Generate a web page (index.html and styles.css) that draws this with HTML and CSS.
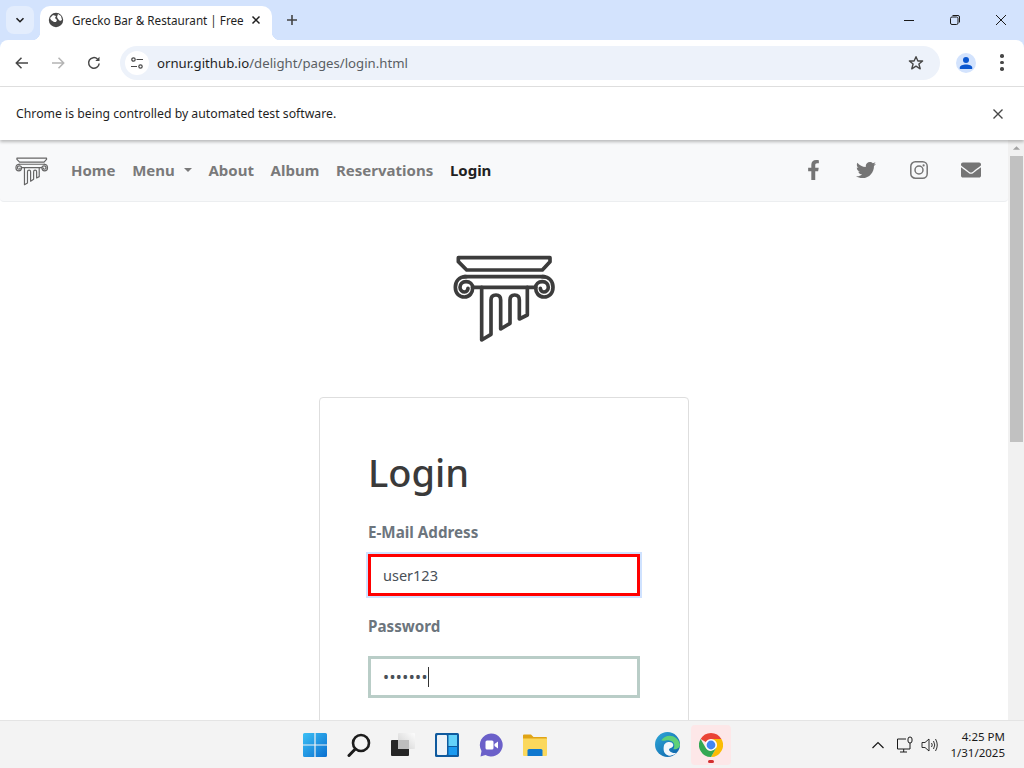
FILE: index.html
```html
<!DOCTYPE html>
<html lang="en">
<head>
<meta charset="utf-8">
<title>Grecko Bar &amp; Restaurant | Free</title>
<link rel="stylesheet" href="styles.css">
</head>
<body>
<svg class="defs" width="0" height="0" aria-hidden="true">
  <symbol id="column" viewBox="0 0 390 315">
    <g fill="none" stroke="currentColor" stroke-width="11" stroke-linejoin="round" stroke-linecap="round">
      <path d="M55 38H330V50L307 75H80L55 50Z"/>
      <path d="M72 95H313"/>
      <path d="M78 95C56 95 46 110 46 127C46 145 58 156 73 156C89 156 98 143 98 128C98 117 90 110 78 110C67 110 60 118 60 127C60 135 67 141 74 141C80 141 84 136 84 130"/>
      <path d="M307 95C329 95 339 110 339 127C339 145 327 156 312 156C296 156 287 143 287 128C287 117 295 110 307 110C318 110 325 118 325 127C325 135 318 141 311 141C305 141 301 136 301 130"/>
      <path d="M98 127H287"/>
      <path d="M125 127V285L153 268V165Q153 150 168 150Q182 150 182 165V252L210 235V165Q210 150 224 150Q238 150 238 165V222L262 210V127"/>
    </g>
  </symbol>
</svg>

<div class="screen">
  <header class="tabstrip">
    <button class="tab-search">
      <svg class="i12" viewBox="0 0 12 12"><path d="M2.500 4.200L6 7.700L9.500 4.200" fill="none" stroke="#1f1f1f" stroke-width="1.600"/></svg>
    </button>
    <div class="tab">
      <svg class="i16" viewBox="0 0 16 16"><circle cx="8" cy="8" r="7.200" fill="#474747"/><path d="M2 6l3-3 3 1-1 2 2 2-1 2H6L3 8zM10 2l3 2 1 4-2 1-2-2-1-2z" fill="#fff"/></svg>
      <span class="tab-title">Grecko Bar &amp; Restaurant | Free</span>
      <svg class="i10" viewBox="0 0 10 10"><path d="M1.500 1.500L8.500 8.500M8.500 1.500L1.500 8.500" stroke="#1f1f1f" stroke-width="1.500"/></svg>
    </div>
    <svg class="new-tab" viewBox="0 0 12 12"><path d="M6 1V11M1 6H11" stroke="#444" stroke-width="1.600"/></svg>
    <div class="window-controls">
      <svg class="i12" viewBox="0 0 12 12"><path d="M1 6.500H11" stroke="#1a1a1a"/></svg>
      <svg class="i12" viewBox="0 0 12 12"><rect x="1.500" y="3" width="7.500" height="7.500" rx="1.500" fill="none" stroke="#1a1a1a"/><path d="M3.500 1.500H9A1.500 1.500 0 0 1 10.500 3V8.500" fill="none" stroke="#1a1a1a"/></svg>
      <svg class="i12" viewBox="0 0 12 12"><path d="M1 1L11 11M11 1L1 11" stroke="#1a1a1a"/></svg>
    </div>
  </header>

  <div class="toolbar">
    <div class="nav-buttons">
      <svg class="i16" viewBox="0 0 16 16"><path d="M14 8H2.500M7.500 2.800L2.300 8L7.500 13.200" fill="none" stroke="#474747" stroke-width="1.500"/></svg>
      <svg class="i16" viewBox="0 0 16 16"><path d="M2 8H13.500M8.500 2.800L13.700 8L8.500 13.200" fill="none" stroke="#b4b4b4" stroke-width="1.500"/></svg>
      <svg class="i16" viewBox="0 0 16 16"><path d="M13.200 8.500A5.300 5.300 0 1 1 11.500 4" fill="none" stroke="#474747" stroke-width="1.500"/><path d="M13.500 1.800V6H9.300" fill="#474747"/></svg>
    </div>
    <div class="omnibox">
      <span class="site-info">
        <svg class="i14" viewBox="0 0 14 14"><g fill="none" stroke="#474747" stroke-width="1.200"><circle cx="3.500" cy="3.500" r="1.700"/><path d="M6.500 3.500H13M1 10.500H7"/><circle cx="10.500" cy="10.500" r="1.700"/></g></svg>
      </span>
      <span class="url"><span class="url-host">ornur.github.io</span>/delight/pages/login.html</span>
      <svg class="star" viewBox="0 0 16 16"><path d="M8 1.700L9.900 6H14.600L10.900 9L12.200 13.800L8 11.200L3.800 13.800L5.100 9L1.400 6H6.100Z" fill="none" stroke="#474747" stroke-width="1.400" stroke-linejoin="round"/></svg>
    </div>
    <span class="profile">
      <svg class="i14" viewBox="0 0 14 14"><circle cx="7" cy="4" r="3" fill="#0b57d0"/><path d="M.8 13V11.500C.8 9.500 4 8.500 7 8.500S13.200 9.500 13.200 11.500V13Z" fill="#0b57d0"/></svg>
    </span>
    <span class="menu-dots"><i></i><i></i><i></i></span>
  </div>

  <div class="infobar">
    <span>Chrome is being controlled by automated test software.</span>
    <svg class="i12" viewBox="0 0 12 12"><path d="M1.500 1.500L10.500 10.500M10.500 1.500L1.500 10.500" stroke="#474747" stroke-width="1.400"/></svg>
  </div>

  <div class="viewport">
    <main class="page">
      <nav class="navbar">
        <svg class="brand" viewBox="0 0 390 315"><use href="#column"/></svg>
        <ul class="nav-links">
          <li>Home</li>
          <li class="dropdown">Menu</li>
          <li>About</li>
          <li>Album</li>
          <li>Reservations</li>
          <li class="active">Login</li>
        </ul>
        <div class="socials">
          <span class="social"><svg class="fb" viewBox="0 0 320 512"><path d="M279.14 288l14.22-92.66h-88.91v-60.13c0-25.35 12.42-50.06 52.24-50.06h40.42V6.26S260.43 0 225.36 0c-73.22 0-121.08 44.38-121.08 124.72v70.62H22.89V288h81.39v224h100.17V288z"/></svg></span>
          <span class="social"><svg class="tw" viewBox="0 0 512 512"><path d="M459.37 151.716c.325 4.548.325 9.097.325 13.645 0 138.72-105.583 298.558-298.558 298.558-59.452 0-114.68-17.219-161.137-47.106 8.447.974 16.568 1.299 25.34 1.299 49.055 0 94.213-16.568 130.274-44.832-46.132-.975-84.792-31.188-98.112-72.772 6.498.974 12.995 1.624 19.818 1.624 9.421 0 18.843-1.3 27.614-3.573-48.081-9.747-84.143-51.98-84.143-102.985v-1.299c13.969 7.797 30.214 12.67 47.431 13.319-28.264-18.843-46.781-51.005-46.781-87.391 0-19.492 5.197-37.36 14.294-52.954 51.655 63.675 129.3 105.258 216.365 109.807-1.624-7.797-2.599-15.918-2.599-24.04 0-57.828 46.782-104.934 104.934-104.934 30.213 0 57.502 12.67 76.67 33.137 23.715-4.548 46.456-13.32 66.599-25.34-7.798 24.366-24.366 44.833-46.132 57.827 21.117-2.273 41.584-8.122 60.426-16.243-14.292 20.791-32.161 39.308-52.628 54.253z"/></svg></span>
          <span class="social"><svg class="ig" viewBox="0 0 18 18"><rect x=".8" y=".8" width="16.400" height="16.400" rx="4.500" fill="none" stroke="currentColor" stroke-width="1.500"/><circle cx="9" cy="9" r="4" fill="none" stroke="currentColor" stroke-width="1.500"/><circle cx="13.600" cy="4.400" r="1.100" fill="currentColor"/></svg></span>
          <span class="social"><svg class="env" viewBox="0 0 512 512"><path d="M502.3 190.8c3.9-3.1 9.7-.2 9.7 4.7V400c0 26.5-21.5 48-48 48H48c-26.5 0-48-21.5-48-48V195.6c0-5 5.7-7.8 9.7-4.7 22.4 17.4 52.1 39.5 154.1 113.6 21.1 15.4 56.7 47.8 92.2 47.6 35.7.3 72-32.8 92.3-47.6 102-74.1 131.6-96.3 154-113.7zM256 320c23.2.4 56.6-29.2 73.4-41.4 132.7-96.3 142.8-104.7 173.4-128.7 5.8-4.500 9.200-11.500 9.200-18.900v-19c0-26.500-21.500-48-48-48H48C21.500 64 0 85.500 0 112v19c0 7.400 3.400 14.300 9.200 18.900 30.600 23.900 40.700 32.400 173.400 128.700 16.800 12.200 50.200 41.800 73.400 41.400z"/></svg></span>
        </div>
      </nav>

      <svg class="hero-logo" viewBox="0 0 390 315"><use href="#column"/></svg>

      <section class="card">
        <h1>Login</h1>
        <label class="label-email">E-Mail Address</label>
        <div class="field field-email">user123</div>
        <label class="label-password">Password</label>
        <div class="field field-password"><span class="dots">•••••••</span><span class="caret"></span></div>
      </section>
    </main>
    <aside class="scrollbar">
      <svg class="scroll-arrow" viewBox="0 0 10 6"><path d="M5 1L9 5H1Z" fill="#a3a3a3"/></svg>
      <div class="scroll-thumb"></div>
    </aside>
  </div>

  <footer class="taskbar">
    <div class="slot">
      <svg class="i24" viewBox="0 0 24 24"><defs><linearGradient id="win" x1="0" y1="0" x2="1" y2="1"><stop offset="0" stop-color="#3cc0f5"/><stop offset="1" stop-color="#0a6fd0"/></linearGradient></defs><path d="M0 1.500A1.500 1.500 0 0 1 1.500 0H11.400V11.400H0ZM12.600 0H22.500A1.500 1.500 0 0 1 24 1.500V11.400H12.600ZM0 12.600H11.400V24H1.500A1.500 1.500 0 0 1 0 22.500ZM12.600 12.600H24V22.500A1.500 1.500 0 0 1 22.500 24H12.600Z" fill="url(#win)"/></svg>
    </div>
    <div class="slot">
      <svg class="i24" viewBox="0 0 24 24"><circle cx="14" cy="10" r="8" fill="none" stroke="#1c1c1c" stroke-width="2.600"/><path d="M8.300 16L2 22.500" stroke="#1c1c1c" stroke-width="3" stroke-linecap="round"/></svg>
    </div>
    <div class="slot">
      <svg class="i24" viewBox="0 0 24 24"><defs><linearGradient id="tv" x1="1" y1="0" x2="0" y2="1"><stop offset="0" stop-color="#fdfdfd"/><stop offset="1" stop-color="#cfcfcf"/></linearGradient></defs><rect x="7" y="0" width="17" height="16" rx="1" fill="url(#tv)"/><rect x="0" y="7" width="18" height="16" rx="1" fill="#262626"/><rect x="7" y="7" width="11" height="9" fill="#bdbdbd"/></svg>
    </div>
    <div class="slot">
      <svg class="i24" viewBox="0 0 24 24"><rect width="24" height="24" rx="1.500" fill="#0f5a9e"/><rect x="2" y="2" width="10" height="20" rx="1" fill="#eef3f8"/><rect x="13.500" y="2" width="8.500" height="11" fill="#64d2fa"/><rect x="13.500" y="14" width="8.500" height="8" fill="#1a9af0"/></svg>
    </div>
    <div class="slot">
      <svg class="i24" viewBox="0 0 24 24"><path d="M12 .500A11.500 11.500 0 1 1 6.500 22L1.500 23.500L2.500 18A11.500 11.500 0 0 1 12 .500Z" fill="#6b60c9"/><rect x="6.500" y="7.500" width="8" height="9" rx="1.500" fill="#fff"/><path d="M15.500 11L19 8.500V15.500L15.500 13Z" fill="#fff"/></svg>
    </div>
    <div class="slot">
      <svg class="i24" viewBox="0 0 24 24"><path d="M0 2.500A1 1 0 0 1 1 1.500H8L10.500 4H23A1 1 0 0 1 24 5V8H0Z" fill="#e0a416"/><path d="M0 5.500H24V22A1 1 0 0 1 23 23H1A1 1 0 0 1 0 22Z" fill="#fbd85c"/><path d="M4.500 23V17.500A1.500 1.500 0 0 1 6 16H18A1.500 1.500 0 0 1 19.500 17.500V23Z" fill="#0f78cf"/></svg>
    </div>
    <div class="slot-gap"></div>
    <div class="slot">
      <svg class="i25" viewBox="0 0 24 24"><defs><linearGradient id="edge" x1="0" y1="0" x2="1" y2="1"><stop offset="0" stop-color="#2fa8d8"/><stop offset="1" stop-color="#0b5fa8"/></linearGradient></defs><circle cx="12" cy="12" r="12" fill="url(#edge)"/><path d="M6 8C10 1 22 2 24 12C24 15 21 17 17.500 16.500C20 13 18 8.500 13 8C10 8 7 9 6 8Z" fill="#5ed077"/><path d="M8.500 13.500C9 9.500 16 8 17.500 12C18 15 14 15.500 13.500 16.500C13 18.500 17 21 20.500 20C17 24.500 6.500 24 8.500 13.500Z" fill="#f2f7fb"/></svg>
    </div>
    <div class="slot slot-active">
      <svg class="i24" viewBox="0 0 24 24"><path d="M12 0A12 12 0 0 1 22.400 6H12A6 6 0 0 0 6.800 9L1.600 6A12 12 0 0 1 12 0Z" fill="#ea4335"/><path d="M22.400 6A12 12 0 0 1 12 24L17.200 15A6 6 0 0 0 17.200 9 6 6 0 0 0 12 6Z" fill="#fbbc04"/><path d="M1.600 6L6.800 15A6 6 0 0 0 12 18H12L17.200 15L12 24A12 12 0 0 1 1.600 6Z" fill="#34a853"/><circle cx="12" cy="12" r="5.600" fill="#fff"/><circle cx="12" cy="12" r="4.400" fill="#4285f4"/></svg>
      <span class="indicator"></span>
    </div>
    <div class="tray">
      <svg class="i14" viewBox="0 0 14 14"><path d="M1.500 10L7 4.500L12.500 10" fill="none" stroke="#1a1a1a" stroke-width="1.200"/></svg>
      <svg class="i18 tray-net" viewBox="0 0 18 18"><path d="M10 3H1.500V13H14V10M4 16H11M7.700 13V16" fill="none" stroke="#1a1a1a"/><rect x="12" y="1" width="4" height="6" rx="2" fill="none" stroke="#1a1a1a"/><path d="M14 7V10" stroke="#1a1a1a"/></svg>
      <svg class="i18 tray-vol" viewBox="0 0 18 18"><path d="M1 6.500H4L8 3V15L4 11.500H1Z M10.500 7Q12 9 10.500 11M12.500 5Q15 9 12.500 13M14.500 3Q18 9 14.500 15" fill="none" stroke="#1a1a1a" stroke-width=".9"/></svg>
      <div class="clock"><span>4:25 PM</span><span>1/31/2025</span></div>
    </div>
  </footer>
</div>
</body>
</html>
```
FILE: styles.css
```css
* { box-sizing: border-box; }
html, body { margin: 0; padding: 0; height: 100%; overflow: hidden; }
body { font-family: "Noto Sans", "Open Sans", sans-serif; background: #fff; }
.defs { position: absolute; }
svg { display: block; flex: none; }
.i10 { width: 10px; height: 10px; }
.i12 { width: 12px; height: 12px; }
.i14 { width: 14px; height: 14px; }
.i16 { width: 16px; height: 16px; }
.i18 { width: 18px; height: 18px; }
.i24 { width: 24px; height: 24px; }
.i25 { width: 25px; height: 25px; }

.screen { width: 1024px; height: 768px; display: flex; flex-direction: column; background: #d3e3fd; }

/* tab strip */
.tabstrip { height: 40px; flex: none; display: flex; align-items: flex-start; padding: 6px 0 0 6px; }
.tab-search { width: 28px; height: 28px; border: 0; padding: 0; border-radius: 8px; background: #e3edfd; display: flex; align-items: center; justify-content: center; }
.tab { position: relative; width: 232px; height: 34px; margin-left: 6px; padding: 0 11px 6px 8px; background: #fff; border-radius: 10px 10px 0 0; display: flex; align-items: center; gap: 8px; }
.tab::before, .tab::after { content: ""; position: absolute; bottom: 0; width: 8px; height: 8px; }
.tab::before { left: -8px; background: radial-gradient(circle at 0 0, transparent 8px, #fff 8.5px); }
.tab::after { right: -8px; background: radial-gradient(circle at 100% 0, transparent 8px, #fff 8.5px); }
.tab-title { flex: 1; min-width: 0; white-space: nowrap; font-size: 11.7px; color: #1f1f1f; }
.new-tab { width: 12px; height: 12px; margin: 8px 0 0 14px; }
.window-controls { margin-left: auto; padding: 8px 17px 0 0; display: flex; gap: 34px; }

/* toolbar */
.toolbar { height: 47px; flex: none; background: #fff; border-radius: 8px 8px 0 0; border-bottom: 1px solid #e1e1e1; display: flex; align-items: center; padding: 0 0 1px 14px; }
.nav-buttons { display: flex; gap: 20px; width: 106px; }
.omnibox { width: 820px; height: 34px; border-radius: 17px; background: #edf2fa; display: flex; align-items: center; padding: 0 16px 0 5px; }
.site-info { width: 24px; height: 24px; border-radius: 50%; background: #fff; display: flex; align-items: center; justify-content: center; }
.url { margin-left: 8px; font-size: 13.2px; color: #5a5e63; white-space: nowrap; }
.url-host { color: #1f1f1f; }
.star { width: 16px; height: 16px; margin-left: auto; }
.profile { width: 20px; height: 20px; margin-left: 16px; border-radius: 50%; background: #d3e3fd; display: flex; align-items: center; justify-content: center; }
.menu-dots { margin-left: 24px; width: 4px; display: flex; flex-direction: column; gap: 3px; }
.menu-dots i { display: block; width: 3.5px; height: 3.5px; border-radius: 50%; background: #474747; }

/* infobar */
.infobar { height: 53px; flex: none; background: #fff; display: flex; align-items: center; justify-content: space-between; padding: 0 20px 0 16px; font-size: 12.25px; color: #1f1f1f; box-shadow: 0 2px 3px rgba(0,0,0,.25); position: relative; z-index: 2; }

/* page */
.viewport { flex: 1; min-height: 0; display: flex; background: #fff; overflow: hidden; }
.page { width: 1008px; flex: none; display: flex; flex-direction: column; align-items: center; }
.navbar { width: 100%; height: 62px; flex: none; background: #f8f9fa; border-bottom: 1px solid #eceef0; border-radius: 0 0 4px 4px; display: flex; align-items: center; padding: 0 10.75px 2px 10.5px; }
.brand { width: 42px; height: 34px; color: #666; margin-top: 3px; }
.nav-links { list-style: none; display: flex; gap: 16.7px; margin: 0 0 0 18.5px; padding: 0; font-size: 15px; font-weight: 700; color: #7a7a7a; }
.nav-links .active { color: #212121; }
.dropdown { display: flex; align-items: center; gap: 9px; }
.dropdown::after { content: ""; border-top: 4.5px solid #7a7a7a; border-left: 4.5px solid transparent; border-right: 4.5px solid transparent; }
.socials { margin-left: auto; display: flex; color: #757575; fill: #757575; }
.social { width: 52.5px; height: 24px; display: flex; align-items: center; justify-content: center; }
.fb { width: 13px; height: 20px; }
.tw { width: 20px; height: 20px; }
.ig { width: 18px; height: 18px; }
.env { width: 20px; height: 20px; }

.hero-logo { width: 130px; height: 105px; margin: 43px 0 0 2px; color: #3c3c3c; flex: none; }
.card { width: 370px; flex: none; margin-top: 47px; padding: 50px 48px 60px; border: 1px solid #dedede; border-radius: 4px; height: 420px; }
.card h1 { margin: 0 0 24px; font-size: 38px; line-height: 48px; font-weight: 500; color: #3a3a3a; }
.card label { display: block; font-size: 15.2px; line-height: 24px; font-weight: 700; color: #6c757d; }
.label-email { margin-bottom: 10px; }
.label-password { margin: 18px 0 18px; }
.field { width: 272px; height: 42px; display: flex; align-items: center; padding: 0 12px; font-size: 14.5px; color: #495057; background: #fff; }
.field-email { border: 3px solid #ff0000; box-shadow: 0 0 0 2px #cfe2ff; }
.field-password { border: 3px solid #b9cdc7; }
.dots { letter-spacing: .4px; font-size: 16px; }
.caret { width: 1px; height: 20px; background: #333; }

/* scrollbar */
.scrollbar { width: 16px; flex: none; background: #f1f1f1; display: flex; flex-direction: column; align-items: center; padding-top: 5px; }
.scroll-arrow { width: 9px; height: 6px; }
.scroll-thumb { width: 13px; height: 286px; margin-top: 5px; background: #c1c1c1; }

/* taskbar */
.taskbar { height: 48px; flex: none; position: relative; z-index: 3; background: #f3f3f3; border-top: 1px solid #e4e4e4; display: flex; align-items: center; padding-left: 293px; }
.slot { position: relative; width: 44px; height: 40px; display: flex; align-items: center; justify-content: center; }
.slot-gap { width: 88px; }
.slot-active { width: 40px; margin-left: 2px; border-radius: 4px; background: #fde7e8; }
.indicator { position: absolute; left: 17px; bottom: 2px; width: 6px; height: 3px; border-radius: 2px; background: #d32f2f; }
.tray { margin-left: auto; width: 153px; padding-right: 19px; display: flex; align-items: center; }
.tray-net { margin-left: 11px; }
.tray-vol { margin-left: 7px; }
.clock { margin-left: auto; display: flex; flex-direction: column; align-items: flex-end; font-size: 11.5px; line-height: 16px; color: #1a1a1a; }
```
